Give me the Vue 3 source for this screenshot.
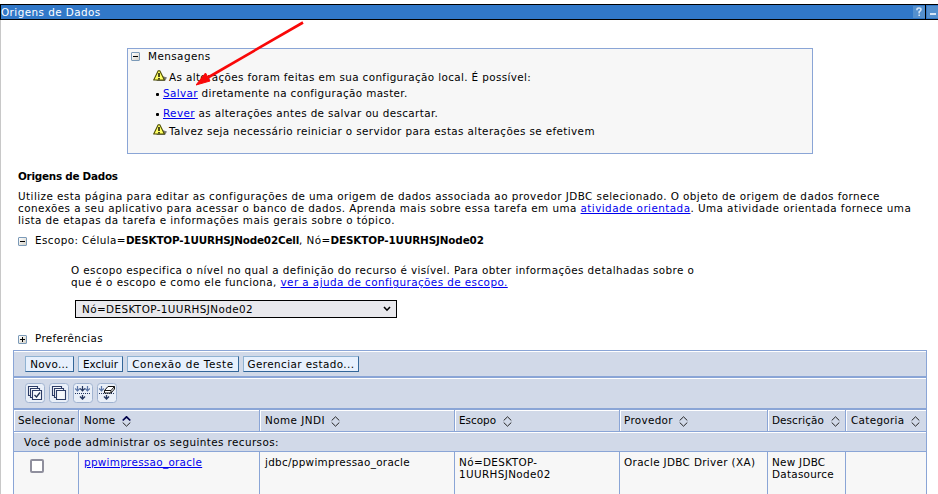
<script setup>
const columns = [
  { label: 'Selecionar', sort: false },
  { label: 'Nome', sort: true, active: true },
  { label: 'Nome JNDI', sort: true },
  { label: 'Escopo', sort: true },
  { label: 'Provedor', sort: true },
  { label: 'Descrição', sort: true },
  { label: 'Categoria', sort: true },
]
const actions = ['Novo...', 'Excluir', 'Conexão de Teste', 'Gerenciar estado...']
const tools = ['select', 'deselect', 'filter', 'clear']
</script>

<template>
  <div class="page">
    <header class="titlebar">
      <span class="title t0">Origens de Dados</span>
      <svg class="help" width="12" height="12" viewBox="0 0 12 12">
        <rect width="12" height="12" fill="#5490ce" />
        <path d="M4 4.2V3.2Q4 2 6 2T8 3.5Q8 4.6 6.2 5.8V7.4M6.2 8.6V10" fill="none" stroke="#d5e5f6" stroke-width="1.6" />
      </svg>
      <i class="divider"></i>
      <svg class="min" width="11" height="12" viewBox="0 0 11 12">
        <rect width="11" height="12" fill="#5490ce" />
        <rect x="3" y="7" width="6" height="2" fill="#d5e5f6" />
      </svg>
    </header>

    <main class="body">
      <section class="messages">
        <div class="line m-head"><i class="toggle"></i><span class="t1">Mensagens</span></div>
        <div class="line warn w1">
          <svg width="14" height="12" viewBox="0 0 14 12"><path d="M9 6L14 7.5L12 11H3Z" fill="#777" /><path d="M5.2.8h1.6L11.4 10H.7Z" fill="#ffff66" stroke="#4d4d00" stroke-width="1.1" stroke-linejoin="round" /><path d="M6 3v4M6 8v1.4" stroke="#000" stroke-width="1.4" /></svg>
          <span class="t2">As alterações foram feitas em sua configuração local. É possível:</span>
        </div>
        <div class="line bullet b1"><i class="dot"></i><span class="t3"><a>Salvar</a> diretamente na configuração master.</span></div>
        <div class="line bullet b2"><i class="dot"></i><span class="t4"><a>Rever</a> as alterações antes de salvar ou descartar.</span></div>
        <div class="line warn w2">
          <svg width="14" height="12" viewBox="0 0 14 12"><path d="M9 6L14 7.5L12 11H3Z" fill="#777" /><path d="M5.2.8h1.6L11.4 10H.7Z" fill="#ffff66" stroke="#4d4d00" stroke-width="1.1" stroke-linejoin="round" /><path d="M6 3v4M6 8v1.4" stroke="#000" stroke-width="1.4" /></svg>
          <span class="t5">Talvez seja necessário reiniciar o servidor para estas alterações se efetivem</span>
        </div>
      </section>

      <h1><span class="t6">Origens de Dados</span></h1>
      <p class="intro">
        <span class="t7">Utilize esta página para editar as configurações de uma origem de dados associada ao provedor JDBC selecionado. O objeto de origem de dados fornece</span><br />
        <span class="t8">conexões a seu aplicativo para acessar o banco de dados. Aprenda mais sobre essa tarefa em uma <a>atividade orientada</a>. Uma atividade orientada fornece uma</span><br />
        <span class="t9">lista de etapas da tarefa e informações mais gerais sobre o tópico.</span>
      </p>
      <div class="line scope"><i class="toggle"></i><span class="t10">Escopo: Célula=<b class="cell">DESKTOP-1UURHSJNode02Cell</b>, Nó=<b class="node">DESKTOP-1UURHSJNode02</b></span></div>
      <p class="scope-text">
        <span class="t11">O escopo especifica o nível no qual a definição do recurso é visível. Para obter informações detalhadas sobre o</span><br />
        <span class="t12">que é o escopo e como ele funciona, <a>ver a ajuda de configurações de escopo.</a></span>
      </p>
      <div class="select">
        <span class="t13">Nó=DESKTOP-1UURHSJNode02</span>
        <svg width="8" height="6" viewBox="0 0 8 6"><path d="M1 1L4 4.2L7 1" fill="none" stroke="#000" stroke-width="1.6" /></svg>
      </div>
      <div class="line prefs"><i class="toggle plus"></i><span class="t14">Preferências</span></div>

      <section class="table">
        <div class="bar actions">
          <button v-for="(a, i) in actions" :key="a" :class="'a' + i"><span>{{ a }}</span></button>
        </div>
        <div class="bar tools">
          <svg v-for="t in tools" :key="t" width="20" height="20" viewBox="0 0 20 20">
            <rect x=".5" y=".5" width="19" height="19" rx="3" fill="#e9eff8" stroke="#a0b3d0" />
            <g v-if="t === 'select' || t === 'deselect'" fill="#f5f8fc" stroke="#2c3c66" stroke-width="1.1">
              <path d="M3.5 12.5V3.5H12.5V12.5Z" /><path d="M5.5 14.5V5.5H14.5V14.5Z" /><path d="M7.5 7.5H16.5V16.5H7.5Z" />
              <path v-if="t === 'select'" d="M9.5 12L11.5 14L15 9.5" fill="none" stroke="#203050" stroke-width="1.3" />
            </g>
            <g v-else fill="none" stroke="#23365f">
              <path d="M2 10.5H18" stroke-dasharray="1 1" />
              <path d="M9.5 12V16M7 13.5L9.5 16L12 13.5" stroke-width="1.3" />
              <path d="M4.5 3V8M2.2 5.5L4.5 7.8L6.8 5.5" stroke="#5b76a6" stroke-width="1.2" />
              <template v-if="t === 'filter'">
                <path d="M9.5 3V8M7.2 5.5L9.5 7.8L11.8 5.5" stroke-width="1.2" />
                <path d="M14.5 3V8M12.2 5.5L14.5 7.8L16.8 5.5" stroke="#5b76a6" stroke-width="1.2" />
              </template>
              <path v-else d="M7.5 7.5L11 3.5H17.5V6L14 10H7.5ZM7.5 7.5H14V10M14 7.5L17.5 3.5" fill="#fff" stroke="#111" />
            </g>
          </svg>
        </div>
        <div class="grid head">
          <div v-for="(c, i) in columns" :key="c.label" class="cellbox">
            <span :class="'h' + i">{{ c.label }}</span>
            <svg v-if="c.sort" width="9" height="11" viewBox="0 0 9 11">
              <path d="M.7 4.5L4.5.8L8.3 4.5" fill="none" :stroke="c.active ? '#00004a' : '#222'" :stroke-width="c.active ? 1.7 : 1" />
              <path d="M.7 6.5L4.5 10.2L8.3 6.5" fill="none" stroke="#222" />
            </svg>
          </div>
        </div>
        <div class="caption"><span class="t15">Você pode administrar os seguintes recursos:</span></div>
        <div class="grid row">
          <div class="cellbox"><i class="check"></i></div>
          <div class="cellbox"><a class="r1">ppwimpressao_oracle</a></div>
          <div class="cellbox"><span class="r2">jdbc/ppwimpressao_oracle</span></div>
          <div class="cellbox"><span class="r3">Nó=DESKTOP-<br />1UURHSJNode02</span></div>
          <div class="cellbox"><span class="r4">Oracle JDBC Driver (XA)</span></div>
          <div class="cellbox"><span class="r5">New JDBC<br />Datasource</span></div>
          <div class="cellbox"></div>
        </div>
      </section>
    </main>

    <svg class="arrow" width="110" height="66" viewBox="0 0 110 66">
      <path d="M107 2.5L12 57.5" stroke="#f90808" stroke-width="2.6" />
      <path d="M0 65L9.5 53L14 61Z" fill="#f90808" stroke="#f90808" />
    </svg>
  </div>
</template>

<style>
body { margin: 0; background: #fff; overflow: hidden; }
</style>

<style scoped>
* { box-sizing: border-box; }
.page { position: relative; width: 938px; height: 494px; overflow: hidden; padding-top: 4px; background: #fff; color: #000; font: 10.4px/12px Verdana, "DejaVu Sans", sans-serif; white-space: nowrap; }
a { color: #0000ee; text-decoration: underline; }
.titlebar { height: 16px; border: 1px solid #000; border-right: 0; background: #3178c8; color: #fff; display: flex; align-items: center; }
.title { margin-right: auto; }
.divider { width: 1px; height: 14px; background: #000; margin: 0 1px 0 0; }
.body { height: 474px; border-left: 1px solid #c8c8c8; padding: 28px 0 0 12px; }
.line { display: flex; height: 12px; align-items: flex-start; }
.toggle { width: 9px; height: 9px; flex: none; border: 1px solid #7b9ab8; border-radius: 1px; background: linear-gradient(#000, #000) center / 5px 1px no-repeat, linear-gradient(135deg, #fff, #d5d2c8); }
.toggle.plus { background: linear-gradient(#000, #000) center / 5px 1px no-repeat, linear-gradient(#000, #000) center / 1px 5px no-repeat, linear-gradient(135deg, #fff, #d5d2c8); }
.messages { width: 686px; height: 106px; margin-left: 114px; border: 1px solid #8aa5d6; background: #f7f7f7; padding: 1px 0 0 3px; }
.m-head { gap: 8px; }
.m-head .toggle { margin-top: 2px; }
.warn { padding-left: 22px; gap: 2px; }
.warn svg { flex: none; }
.w1 { margin-top: 9px; }
.bullet { padding-left: 25px; gap: 5px; }
.b1 { margin-top: 4px; }
.b2 { margin-top: 8px; }
.w2 { margin-top: 6px; }
.w2 svg { margin-top: -1px; }
.w1 svg { margin-top: -1px; }
.dot { width: 3px; height: 3px; border-radius: 1px; background: #000; margin: 6px -1px 0 0; }
h1 { margin: 16px 0 0 5px; font-size: 10.4px; line-height: 12px; }
.intro { margin: 8px 0 0 5px; }
.scope { margin: 8px 0 0 5px; gap: 8px; }
.scope .toggle, .prefs .toggle { margin-top: 3px; }
.scope-text { margin: 18px 0 0 58px; }
.select { width: 322px; height: 18px; margin: 12px 0 0 62px; padding: 0 5px 0 6px; border: 1px solid #000; background: #e9e9ed; display: flex; align-items: center; justify-content: space-between; }
.prefs { margin: 14px 0 0 5px; gap: 8px; }
.table { width: 914px; height: 150px; margin-top: 6px; border: 1px solid #8aa5d6; background: #d1d9e8; }
.bar { display: flex; border-top: 1px solid #fff; border-bottom: 2px solid #8aa5d6; padding-left: 11px; gap: 4px; }
.actions { height: 27px; padding-top: 4px; }
.tools { height: 32px; padding-top: 4px; }
button { height: 16px; margin: 0; padding: 0; border: 1px solid; border-color: #8fb2d2 #336699 #336699 #8fb2d2; background: #e7f0fd; color: #000; font: inherit; line-height: 14px; text-align: center; }
.a0 { width: 49px; letter-spacing: .3px; }
.a1 { width: 45px; }
.a2 { width: 112px; letter-spacing: .62px; }
.a3 { width: 116px; letter-spacing: .42px; }
.grid { display: grid; grid-template-columns: 64px 181px 195px 165px 148px 78px 81px; }
.cellbox { border-left: 1px solid #8aa5d6; padding-left: 5px; }
.cellbox:first-child { border-left: 0; padding-left: 4px; }
.cellbox:nth-child(n + 4):nth-child(-n + 6) { padding-left: 4px; }
.head { height: 22px; border-bottom: 1px solid #8aa5d6; }
.head .cellbox { display: flex; gap: 6.5px; padding-top: 4px; box-shadow: inset 1px 1px #fff; }
.head svg { flex: none; margin-top: 2px; }
.caption { height: 20px; border-top: 1px solid #fff; border-bottom: 1px solid #8aa5d6; padding: 3px 0 0 10px; }
.row { height: 43px; background: #f7f7f7; }
.row .cellbox { padding-top: 4px; }
.check { display: block; width: 14px; height: 14px; margin: 3px 0 0 12px; border: 2px solid #8f8f9d; border-radius: 2px; background: #fff; }
.arrow { position: absolute; left: 196px; top: 20px; }

/* tracking */
.t0, .t1, .t7, .t8, .t9 { letter-spacing: .442px; }
.t2, .t3, .t4 { letter-spacing: .37px; }
.t5 { letter-spacing: .39px; }
.t6 { letter-spacing: -.25px; }
.t10 { letter-spacing: .4px; }
.cell { letter-spacing: -.18px; }
.node { letter-spacing: -.12px; }
.t11 { letter-spacing: .405px; }
.t12 { letter-spacing: .425px; }
.t13, .t15 { letter-spacing: .41px; }
.t14 { letter-spacing: .33px; }
.h0 { letter-spacing: .22px; }
.h1 { letter-spacing: .2px; }
.h2 { letter-spacing: .45px; }
.h4, .h6 { letter-spacing: .33px; }
.h5 { letter-spacing: .1px; }
.r1, .r2 { letter-spacing: .3px; }
.r3 { letter-spacing: .38px; }
.r4 { letter-spacing: .35px; }
.r5 { letter-spacing: .27px; }
</style>
